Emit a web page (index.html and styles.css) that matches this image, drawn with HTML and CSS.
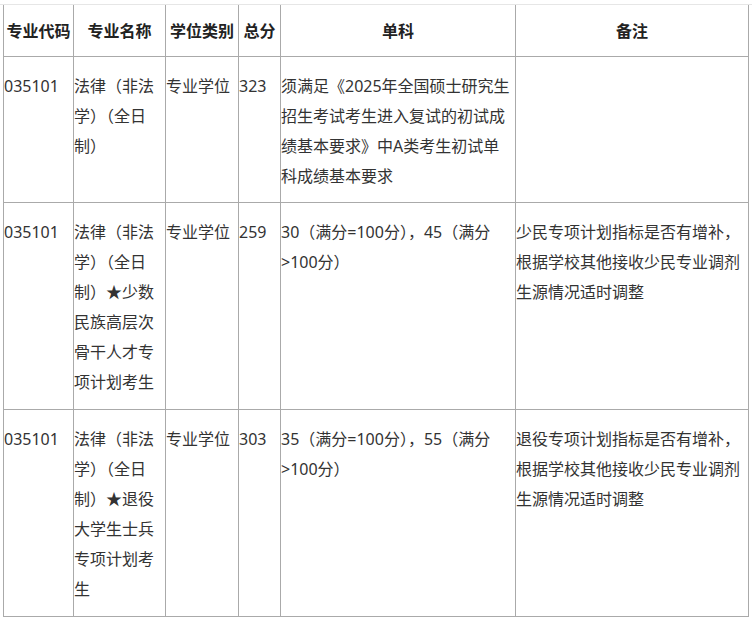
FILE: index.html
```html
<!DOCTYPE html>
<html lang="zh-CN">
<head>
<meta charset="utf-8">
<title>复试分数线</title>
<link rel="stylesheet" href="styles.css">
</head>
<body>
<div class="page">
  <div class="rule"></div>
  <table class="score-table">
    <thead>
      <tr>
        <th class="c-code">专业代码</th>
        <th class="c-name">专业名称</th>
        <th class="c-type">学位类别</th>
        <th class="c-total">总分</th>
        <th class="c-single">单科</th>
        <th class="c-note">备注</th>
      </tr>
    </thead>
    <tbody>
      <tr class="first">
        <td>035101</td>
        <td>法律（非法学）（全日制）</td>
        <td>专业学位</td>
        <td>323</td>
        <td>须满足《2025年全国硕士研究生招生考试考生进入复试的初试成绩基本要求》中A类考生初试单科成绩基本要求</td>
        <td></td>
      </tr>
      <tr>
        <td>035101</td>
        <td>法律（非法学）（全日制）★少数民族高层次骨干人才专项计划考生</td>
        <td>专业学位</td>
        <td>259</td>
        <td>30（满分=100分），45（满分&gt;100分）</td>
        <td>少民专项计划指标是否有增补，根据学校其他接收少民专业调剂生源情况适时调整</td>
      </tr>
      <tr>
        <td>035101</td>
        <td>法律（非法学）（全日制）★退役大学生士兵专项计划考生</td>
        <td>专业学位</td>
        <td>303</td>
        <td>35（满分=100分），55（满分&gt;100分）</td>
        <td>退役专项计划指标是否有增补，根据学校其他接收少民专业调剂生源情况适时调整</td>
      </tr>
    </tbody>
  </table>
</div>
</body>
</html>
```

FILE: styles.css
```css
html, body {
  margin: 0;
  padding: 0;
  background: #ffffff;
}

.page {
  padding-top: 4px;
  font-family: "Noto Sans", "Noto Sans CJK SC", sans-serif;
  font-size: 16px;
  line-height: 30px;
  color: #333333;
}

.rule {
  border-top: 1px solid #e6e6e6;
}

.score-table {
  margin-left: 3px;
  width: 746px;
  table-layout: fixed;
  border-collapse: separate;
  border-spacing: 0;
  border-left: 1px solid #aaaaaa;
}

.score-table th,
.score-table td {
  box-sizing: border-box;
  border-right: 1px solid #aaaaaa;
  border-bottom: 1px solid #aaaaaa;
  word-break: normal;
}

.score-table th {
  padding: 11px 0 10px;
  font-weight: bold;
  color: #222222;
  text-align: center;
  vertical-align: middle;
}

.score-table td {
  padding: 14px 1px 12px 0;
  text-align: left;
  vertical-align: top;
}

.score-table tr.first td {
  padding-bottom: 11px;
}

.c-code { width: 70px; }
.c-name { width: 92px; }
.c-type { width: 73px; }
.c-total { width: 42px; }
.c-single { width: 235px; }
.c-note { width: 233px; }
```
